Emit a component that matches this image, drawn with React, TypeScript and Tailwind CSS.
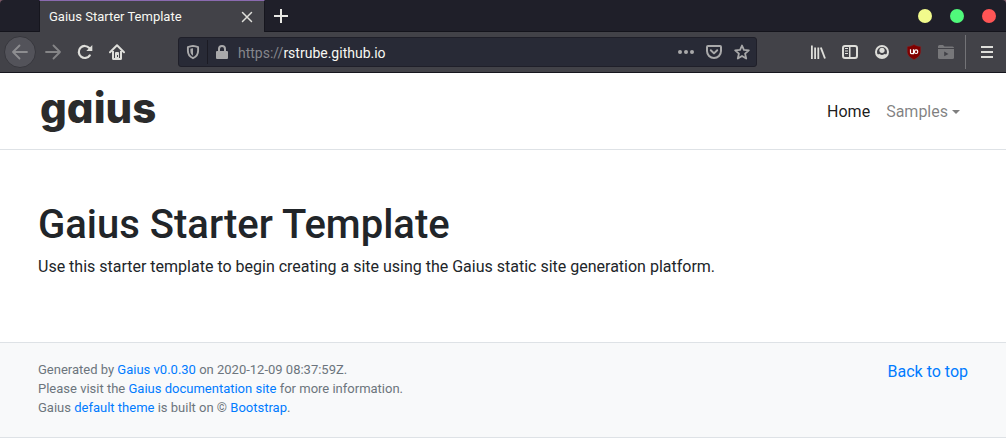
import type { ReactNode } from "react";

function Icon({ children, className = "" }: { children: ReactNode; className?: string }) {
  return (
    <svg viewBox="0 0 16 16" width="16" height="16" fill="currentColor" aria-hidden="true" className={className}>
      {children}
    </svg>
  );
}

function ToolButton({ label, children, className = "" }: { label: string; children: ReactNode; className?: string }) {
  return (
    <button
      type="button"
      aria-label={label}
      className={`flex size-8 shrink-0 items-center justify-center text-[#dededa] ${className}`}
    >
      {children}
    </button>
  );
}

function TabStrip() {
  return (
    <div className="bg-[#7d5a68]">
      <div className="flex h-8 items-stretch rounded-t-sm border-b border-[#14141c] bg-[#1f1f29] pl-[39px]">
        <div className="-mb-px flex w-[226px] items-center border-x border-t border-x-[#16161e] border-t-[#8a6ab0] bg-[#424248] pr-[9px] pl-[9px]">
          <span className="flex-1 text-[13px] text-[#f8f8f2]">Gaius Starter Template</span>
          <button type="button" aria-label="Close tab" className="flex size-4 items-center justify-center text-[#dededa]">
            <Icon>
              <path d="M3.5 3.5l9 9M12.500 3.500l-9 9" fill="none" stroke="currentColor" strokeWidth="1.500" strokeLinecap="round" />
            </Icon>
          </button>
        </div>
        <button type="button" aria-label="New tab" className="flex w-8 items-center justify-center text-[#e8e8e4]">
          <Icon>
            <path d="M7 1h2v6h6v2H9v6H7V9H1V7h6z" />
          </Icon>
        </button>
        <div className="ml-auto flex items-center gap-[18px] pr-[10px]">
          <button type="button" aria-label="Minimize" className="size-[14px] rounded-full bg-[#f1fa8c]" />
          <button type="button" aria-label="Maximize" className="size-[14px] rounded-full bg-[#50fa7b]" />
          <button type="button" aria-label="Close window" className="size-[14px] rounded-full bg-[#ff5555]" />
        </div>
      </div>
    </div>
  );
}

function AddressBar() {
  return (
    <div className="mx-[45px] flex h-[30px] min-w-0 flex-1 items-center rounded-[3px] border border-[#1f1f29] bg-[#282a36] text-[#a9a9aa]">
      <button type="button" aria-label="Tracking protection" className="flex h-6 w-[29px] items-center justify-center border-r border-[#1b1b24]">
        <Icon>
          <path
            d="M8 1.900c2 .3 3.500.7 5.100 1.300v3.600c0 3.500-1.800 6-5.100 7.400-3.300-1.400-5.100-3.900-5.100-7.400V3.200C4.500 2.600 6 2.200 8 1.900z"
            fill="none"
            stroke="currentColor"
            strokeWidth="1.900"
            strokeLinejoin="round"
          />
          <path d="M8 4.200v7.600C6.200 10.600 5.400 9.200 5.400 6.800V4.800C6.200 4.500 7 4.300 8 4.200z" />
        </Icon>
      </button>
      <button type="button" aria-label="Site information" className="flex h-full w-7 items-center justify-center">
        <Icon>
          <path d="M4 7V5a4 4 0 0 1 8 0v2h1a1 1 0 0 1 1 1v6a1 1 0 0 1-1 1H3a1 1 0 0 1-1-1V8a1 1 0 0 1 1-1zm2 0h4V5a2 2 0 0 0-4 0z" />
        </Icon>
      </button>
      <p className="min-w-0 flex-1 truncate pt-[2px] pl-[2px] text-[14px] text-[#f8f8f2]">
        <span className="text-[#85868c]">https://</span>rstrube.github.io
      </p>
      <div className="flex gap-3 pr-[6px]">
        <button type="button" aria-label="Page actions">
          <Icon>
            <circle cx="2" cy="8" r="2" />
            <circle cx="8" cy="8" r="2" />
            <circle cx="14" cy="8" r="2" />
          </Icon>
        </button>
        <button type="button" aria-label="Save to Pocket">
          <Icon>
            <path
              d="M2 2h12a1 1 0 0 1 1 1v4a7 7 0 0 1-14 0V3a1 1 0 0 1 1-1z"
              fill="none"
              stroke="currentColor"
              strokeWidth="2"
            />
            <path d="M4.800 6.300L8 9.400l3.200-3.100" fill="none" stroke="currentColor" strokeWidth="2" strokeLinecap="round" strokeLinejoin="round" />
          </Icon>
        </button>
        <button type="button" aria-label="Bookmark this page">
          <Icon>
            <path
              d="M8 1.500l1.900 4.400 4.900.5-3.700 3.200 1.100 4.900L8 11.900l-4.200 2.600 1.100-4.900L1.200 6.400l4.900-.5z"
              fill="none"
              stroke="currentColor"
              strokeWidth="1.800"
              strokeLinejoin="round"
            />
          </Icon>
        </button>
      </div>
    </div>
  );
}

function Toolbar() {
  return (
    <div className="flex h-[41px] items-center border-b border-[#16161e] bg-[#424248] pr-[3px] pl-1">
      <ToolButton label="Back" className="mr-px rounded-full border border-[#37373d] bg-[#53535a]">
        <Icon>
          <path d="M7.500 1.500L1 8l6.500 6.500M1 8h14" fill="none" stroke="#8d8d90" strokeWidth="1.800" strokeLinecap="round" strokeLinejoin="round" />
        </Icon>
      </ToolButton>
      <ToolButton label="Forward">
        <Icon>
          <path d="M8.500 1.500L15 8l-6.500 6.500M15 8H1" fill="none" stroke="#858587" strokeWidth="1.800" strokeLinecap="round" strokeLinejoin="round" />
        </Icon>
      </ToolButton>
      <ToolButton label="Reload">
        <Icon>
          <path d="M12.800 11.300A6 6 0 1 1 12.300 4" fill="none" stroke="currentColor" strokeWidth="2.200" strokeLinecap="round" />
          <path d="M15.300 1v6h-6z" />
        </Icon>
      </ToolButton>
      <ToolButton label="Home">
        <Icon>
          <path d="M1 8.200L8 1.300l7 6.900" fill="none" stroke="currentColor" strokeWidth="2" strokeLinecap="round" strokeLinejoin="round" />
          <path d="M4 7v7.500a.5.5 0 0 0 .5.5h7a.5.5 0 0 0 .5-.5V7" fill="none" stroke="currentColor" strokeWidth="2" />
          <path d="M6 9a1 1 0 0 1 1-1h2a1 1 0 0 1 1 1v6H6z" />
          <path d="M8 11h1v2H8z" fill="#424248" />
        </Icon>
      </ToolButton>

      <AddressBar />

      <ToolButton label="Library">
        <Icon>
          <path d="M1 1.500h1.800V15H1zM4.200 3.500H6V15H4.200zM7.400 3.500h1.800V15H7.400z" />
          <path d="M10.800 3.500l4.200 11" fill="none" stroke="currentColor" strokeWidth="1.900" />
        </Icon>
      </ToolButton>
      <ToolButton label="Sidebars">
        <Icon>
          <rect x="1" y="2" width="14" height="12" rx="2" fill="none" stroke="currentColor" strokeWidth="2" />
          <path d="M7 2h1.500v12H7zM3 4h3v1H3zM3 6.500h3v1H3zM3 9h3v1H3z" />
        </Icon>
      </ToolButton>
      <ToolButton label="Account">
        <Icon>
          <circle cx="8" cy="8" r="6" fill="none" stroke="currentColor" strokeWidth="2" />
          <circle cx="8" cy="6.300" r="2.600" />
          <path d="M3 10c1 .3 2 .2 2.700 0 1.300 1.200 3.300 1.200 4.600 0 .7.2 1.700.3 2.700 0-.4 2-2.500 3.500-5 3.500S3.400 12 3 10z" />
        </Icon>
      </ToolButton>
      <ToolButton label="uBlock Origin">
        <Icon>
          <path d="M8 .5c2 1.300 4.500 1.900 6.800 2v4.800c0 4-2.600 6.300-6.800 8.400-4.200-2.100-6.800-4.400-6.800-8.400V2.500C3.500 2.400 6 1.800 8 .5z" fill="#800000" stroke="#73373b" strokeWidth=".5" />
          <path d="M4.500 5.200v3.200c0 .9.400 1.300 1.300 1.300h1.700V5.200" fill="none" stroke="#fff" strokeWidth="1.200" />
          <rect x="8.500" y="5.800" width="3.200" height="3.700" rx="1.500" fill="none" stroke="#fff" strokeWidth="1.200" />
        </Icon>
      </ToolButton>
      <ToolButton label="Media folder">
        <Icon>
          <path d="M0 4V2.500A1.500 1.500 0 0 1 1.500 1H5l1.500 1.500h8A1.500 1.500 0 0 1 16 4z" fill="#77777a" />
          <path d="M0 5h16v8.500a1.500 1.500 0 0 1-1.500 1.500h-13A1.500 1.500 0 0 1 0 13.500z" fill="#77777a" />
          <path d="M6.200 7.500v4.800l4.300-2.400z" fill="#424248" />
        </Icon>
      </ToolButton>
      <div className="mx-[3px] h-[34px] w-px bg-[#737377]" />
      <ToolButton label="Open menu" className="ml-[2px]">
        <Icon>
          <path d="M2 2h12v2H2zM2 7h12v2H2zM2 12h12v2H2z" />
        </Icon>
      </ToolButton>
    </div>
  );
}

const container = "mx-auto w-full max-w-[960px] px-[15px]";

function FooterLink({ children }: { children: ReactNode }) {
  return (
    <a href="#" className="text-[#007bff] hover:underline">
      {children}
    </a>
  );
}

export default function App() {
  return (
    <div className="bg-white font-[Roboto,sans-serif] text-[16px] leading-6 text-[#212529]">
      <TabStrip />
      <Toolbar />

      <header className="border-b border-[#dee2e6]">
        <nav className={`flex items-start justify-between pt-[9px] pb-[15px] ${container}`}>
          <a
            href="#"
            className="pl-[2px] font-[Inter,sans-serif] text-[42px] leading-[52px] font-extrabold text-[#2b2b2b] [font-feature-settings:'cv11']"
          >
            gaius
          </a>
          <div className="flex items-center gap-4 pt-[18px] pr-2">
            <a href="#" className="text-black/90">
              Home
            </a>
            <button type="button" aria-haspopup="menu" className="flex items-center gap-1 text-black/50">
              Samples
              <svg viewBox="0 0 8 4" width="8" height="4" fill="currentColor" aria-hidden="true">
                <path d="M0 0h8L4 4z" />
              </svg>
            </button>
          </div>
        </nav>
      </header>

      <main className={`pt-[51px] pb-[63px] ${container}`}>
        <h1 className="text-[40px] leading-[48px] font-medium">Gaius Starter Template</h1>
        <p className="mt-[6px]">Use this starter template to begin creating a site using the Gaius static site generation platform.</p>
      </main>

      <footer className="border-y border-[#dee2e6] bg-[#f8f9fa]">
        <div className={`flex items-start justify-between pt-[17px] pb-5 ${container}`}>
          <div className="text-[13px] leading-[19px] text-[#6c757d]">
            <p>
              Generated by <FooterLink>Gaius v0.0.30</FooterLink> on 2020-12-09 08:37:59Z.
            </p>
            <p>
              Please visit the <FooterLink>Gaius documentation site</FooterLink> for more information.
            </p>
            <p>
              Gaius <FooterLink>default theme</FooterLink> is built on © <FooterLink>Bootstrap</FooterLink>.
            </p>
          </div>
          <FooterLink>Back to top</FooterLink>
        </div>
      </footer>
    </div>
  );
}
